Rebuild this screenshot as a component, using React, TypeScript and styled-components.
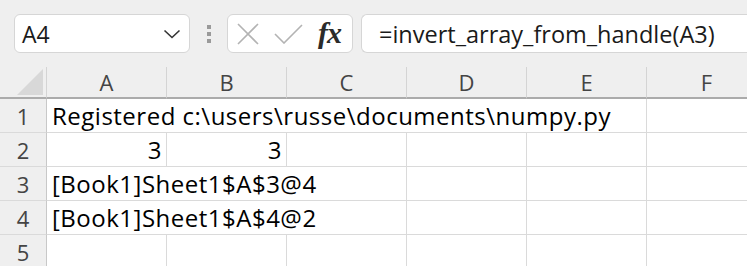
import { Fragment } from "react"
import { createGlobalStyle, styled } from "styled-components"

const GlobalStyle = createGlobalStyle`
  html, body {
    margin: 0;
    padding: 0;
    background: #efefef;
    overflow: hidden;
  }
  body {
    font-family: "Open Sans", "Noto Sans", sans-serif;
  }
`

const Page = styled.div`
  width: 747px;
  height: 266px;
  background: #efefef;
  overflow: hidden;
`

const Toolbar = styled.div`
  display: flex;
  align-items: center;
  height: 67px;
  padding: 14px 0 14px 14px;
  box-sizing: border-box;
`

const Box = styled.div<{ $width?: number }>`
  flex: ${({ $width }) => ($width ? "0 0 auto" : "1 1 auto")};
  width: ${({ $width }) => ($width ? `${$width}px` : "auto")};
  height: 39px;
  box-sizing: border-box;
  background: #ffffff;
  border: 1px solid #d6d6d6;
  border-radius: 6px;
  display: flex;
  align-items: center;
`

const NameBox = styled(Box)`
  justify-content: space-between;
  padding: 0 8px 0 7px;
  font-size: 23px;
  color: #1a1a1a;
`

const Grip = styled.div`
  width: 37px;
  display: flex;
  flex-direction: column;
  align-items: center;
  gap: 3px;
  span {
    width: 4px;
    height: 4px;
    background: #9a9a9a;
  }
`

const FxBox = styled(Box)`
  padding: 0 0 0 9px;
  gap: 15px;
`

const FxText = styled.span`
  font-family: "Liberation Serif", "DejaVu Serif", serif;
  font-style: italic;
  font-weight: 700;
  font-size: 30px;
  color: #2b2b2b;
  letter-spacing: -1px;
  line-height: 1;
  padding-bottom: 2px;
`

const FormulaBox = styled(Box)`
  margin-left: 8px;
  border-right: none;
  border-radius: 6px 0 0 6px;
  padding-left: 17px;
  font-size: 23.5px;
  color: #1a1a1a;
  white-space: nowrap;
`

const Sheet = styled.div`
  display: grid;
  grid-template-columns: 47px repeat(6, 120px);
  grid-template-rows: 32px repeat(5, 34px);
  background: #ffffff;
`

const Corner = styled.div`
  background: #efefef;
  border-right: 1px solid #d4d4d4;
  border-bottom: 2px solid #ababab;
  box-sizing: border-box;
  position: relative;
  &::after {
    content: "";
    position: absolute;
    right: 3px;
    bottom: 2px;
    width: 0;
    height: 0;
    border-style: solid;
    border-width: 0 0 26px 26px;
    border-color: transparent transparent #d8d8d8 transparent;
  }
`

const ColHead = styled.div`
  background: #efefef;
  border-right: 1px solid #d4d4d4;
  border-bottom: 2px solid #ababab;
  box-sizing: border-box;
  display: flex;
  align-items: center;
  justify-content: center;
  font-size: 22px;
  color: #444444;
`

const RowHead = styled.div`
  background: #efefef;
  border-right: 1px solid #c8c8c8;
  border-bottom: 1px solid #dadada;
  box-sizing: border-box;
  display: flex;
  align-items: center;
  justify-content: center;
  font-size: 22px;
  color: #444444;
`

const Cell = styled.div<{ $align?: "left" | "right" }>`
  border-right: 1px solid #dadada;
  border-bottom: 1px solid #dadada;
  box-sizing: border-box;
  display: flex;
  align-items: center;
  justify-content: ${({ $align }) => ($align === "right" ? "flex-end" : "flex-start")};
  padding: 0 4px 1px 5px;
  font-size: 24px;
  letter-spacing: 0.5px;
  color: #000000;
  white-space: nowrap;
  overflow: visible;
  position: relative;
`

const Spill = styled.span`
  position: relative;
  z-index: 1;
  background: #ffffff;
`

const columns = ["A", "B", "C", "D", "E", "F"]

const rows: { text?: string; values?: string[] }[] = [
  { text: "Registered c:\\users\\russe\\documents\\numpy.py" },
  { values: ["3", "3"] },
  { text: "[Book1]Sheet1$A$3@4" },
  { text: "[Book1]Sheet1$A$4@2" },
  {},
]

function Chevron() {
  return (
    <svg width="18" height="10" viewBox="0 0 18 10">
      <path d="M1.5 1.5 L9 8.5 L16.5 1.5" fill="none" stroke="#333" strokeWidth="1.6" />
    </svg>
  )
}

function Cross() {
  return (
    <svg width="22" height="22" viewBox="0 0 22 22">
      <path d="M1 1 L21 21 M21 1 L1 21" stroke="#b3b3b3" strokeWidth="1.6" fill="none" />
    </svg>
  )
}

function Check() {
  return (
    <svg width="29" height="20" viewBox="0 0 29 20">
      <path d="M1 10 L10 19 L28 1" stroke="#b3b3b3" strokeWidth="1.6" fill="none" />
    </svg>
  )
}

export default function App() {
  return (
    <Page>
      <GlobalStyle />
      <Toolbar>
        <NameBox $width={176}>
          <span>A4</span>
          <Chevron />
        </NameBox>
        <Grip>
          <span />
          <span />
          <span />
        </Grip>
        <FxBox $width={126}>
          <Cross />
          <Check />
          <FxText>fx</FxText>
        </FxBox>
        <FormulaBox>=invert_array_from_handle(A3)</FormulaBox>
      </Toolbar>
      <Sheet>
        <Corner />
        {columns.map((c) => (
          <ColHead key={c}>{c}</ColHead>
        ))}
        {rows.map((row, r) => (
          <Fragment key={r}>
            <RowHead>{r + 1}</RowHead>
            {columns.map((c, i) => {
              if (row.text && i === 0) {
                return (
                  <Cell key={c}>
                    <Spill>{row.text}</Spill>
                  </Cell>
                )
              }
              if (row.values && row.values[i]) {
                return (
                  <Cell key={c} $align="right">
                    {row.values[i]}
                  </Cell>
                )
              }
              return <Cell key={c} />
            })}
          </Fragment>
        ))}
      </Sheet>
    </Page>
  )
}
